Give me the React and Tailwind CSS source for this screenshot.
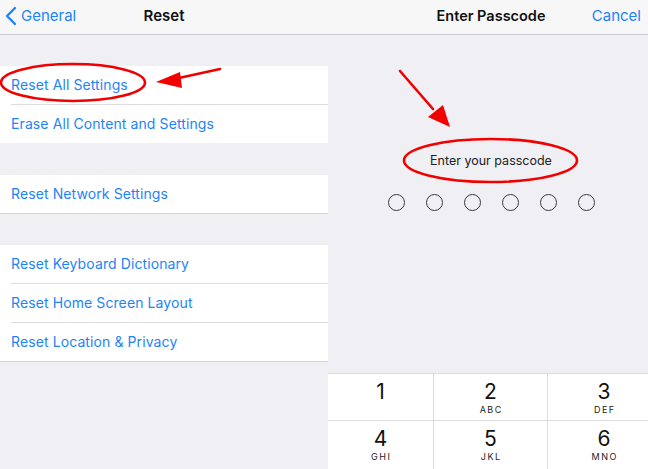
import React from "react";

const blue = "text-[#1d84f7]";

function Group({ items, border }) {
  return (
    <div className={`bg-white ${border ? "border-b border-[#d4d4d8]" : ""}`}>
      {items.map((t, i) => (
        <React.Fragment key={t}>
          <div className="h-[38px] flex items-center pl-[11px] pb-[2px]">
            <span className={`${blue} text-[14px] tracking-[0.1px]`}>{t}</span>
          </div>
          {i < items.length - 1 && <div className="ml-[11px] h-px bg-[#dcdce0]" />}
        </React.Fragment>
      ))}
    </div>
  );
}

function Key({ n, l, w, border }) {
  return (
    <div className={`shrink-0 flex flex-col items-center justify-start pt-[6px] bg-white ${border ? "border-r border-[#dcdcdf]" : ""}`} style={{ width: w }}>
      <span className="text-[21px] leading-[24px] text-[#111]">{n}</span>
      {l && <span className="text-[9px] leading-[10px] tracking-[1.5px] text-[#222] mt-[1px] pl-[1.5px]">{l}</span>}
    </div>
  );
}

export default function App() {
  return (
    <div className="relative w-[648px] h-[469px] overflow-hidden bg-[#efeff4]" style={{ fontFamily: "Inter, 'Noto Sans', sans-serif" }}>
      <div className="flex h-[35px] bg-[#f7f7f8] border-b border-[#c8c7cc] pb-[2px]">
        <div className="relative w-[328px] shrink-0 flex items-center">
          <div className={`flex items-center pl-[5px] ${blue}`}>
            <svg width="12" height="20" viewBox="0 0 12 20" className="mr-[4px]">
              <path d="M10 2 L2 10 L10 18" fill="none" stroke="#1d84f7" strokeWidth="2.4" strokeLinecap="round" strokeLinejoin="round" />
            </svg>
            <span className="text-[15px]">General</span>
          </div>
          <div className="absolute left-0 right-0 text-center text-[15px] font-semibold text-[#111] pointer-events-none">Reset</div>
        </div>
        <div className="relative flex-1 flex items-center justify-end pr-[7px]">
          <div className="absolute left-0 right-0 text-center text-[14.5px] font-semibold text-[#111] pl-[6px]">Enter Passcode</div>
          <span className={`${blue} text-[15px] relative`}>Cancel</span>
        </div>
      </div>
      <div className="flex h-[434px]">
        <div className="w-[328px] shrink-0 pt-[31px] flex flex-col">
          <Group items={["Reset All Settings", "Erase All Content and Settings"]} />
          <div className="h-[32px]" />
          <Group items={["Reset Network Settings"]} border />
          <div className="h-[31px]" />
          <Group items={["Reset Keyboard Dictionary", "Reset Home Screen Layout", "Reset Location & Privacy"]} border />
        </div>
        <div className="flex-1 min-w-0 overflow-hidden flex flex-col">
          <div className="h-[117px]" />
          <div className="text-center text-[12.5px] text-[#222] pl-[6px]">Enter your passcode</div>
          <div className="flex justify-center gap-[21px] mt-[23px] pl-[6px]">
            {[0, 1, 2, 3, 4, 5].map((i) => (
              <div key={i} className="w-[17px] h-[17px] rounded-full border border-[#3a3a3a]" />
            ))}
          </div>
          <div className="flex-1" />
          <div className="w-[332px] shrink-0 flex flex-col border-t border-[#dcdcdf]">
            <div className="flex h-[47px] border-b border-[#dcdcdf]">
              <Key n="1" l="" w={106} border />
              <Key n="2" l="ABC" w={114} border />
              <Key n="3" l="DEF" w={112} />
            </div>
            <div className="flex h-[48px]">
              <Key n="4" l="GHI" w={106} border />
              <Key n="5" l="JKL" w={114} border />
              <Key n="6" l="MNO" w={112} />
            </div>
          </div>
        </div>
      </div>
      <svg className="absolute inset-0 pointer-events-none" width="648" height="469">
        <ellipse cx="73" cy="82.5" rx="72" ry="18.5" fill="none" stroke="#f10000" strokeWidth="2.6" />
        <line x1="220" y1="69" x2="172" y2="79.5" stroke="#f10000" strokeWidth="2.6" strokeLinecap="round" />
        <polygon points="156,82 180,72 182,88" fill="#f10000" />
        <line x1="400" y1="71" x2="433" y2="109" stroke="#f10000" strokeWidth="2.6" strokeLinecap="round" />
        <polygon points="450,127 428,117 443,105" fill="#f10000" />
        <ellipse cx="490.5" cy="160.5" rx="86.5" ry="21.5" fill="none" stroke="#f10000" strokeWidth="2.6" />
      </svg>
    </div>
  );
}
